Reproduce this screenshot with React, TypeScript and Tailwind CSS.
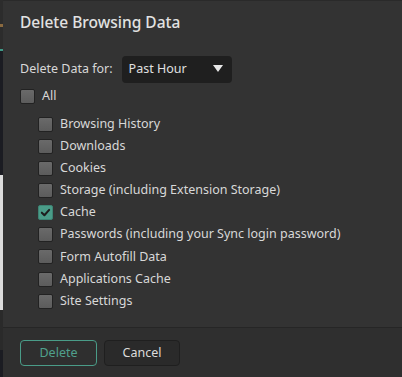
import { useState } from "react";

const items = [
    "Browsing History",
    "Downloads",
    "Cookies",
    "Storage (including Extension Storage)",
    "Cache",
    "Passwords (including your Sync login password)",
    "Form Autofill Data",
    "Applications Cache",
    "Site Settings",
];

const Box: React.FC<{ checked: boolean; onToggle: () => void }> = ({ checked, onToggle }) => {
    if (checked) {
        return (
            <button onClick={onToggle} className="w-[15px] h-[15px] rounded-[2px] bg-[#4a9c88] border border-[#3d8373] flex items-center justify-center shrink-0">
                <svg width="11" height="11" viewBox="0 0 12 12">
                    <path d="M2 6.2 L4.8 9 L10 3.2" fill="none" stroke="#1d1d1d" strokeWidth="2.2" strokeLinecap="round" strokeLinejoin="round" />
                </svg>
            </button>
        );
    }
    return (
        <button onClick={onToggle} className="w-[15px] h-[15px] rounded-[2px] bg-gradient-to-b from-[#6a6a6a] to-[#5c5c5c] border border-[#222222] shrink-0" />
    );
};

export default function App() {
    const [all, setAll] = useState(false);
    const [checked, setChecked] = useState<boolean[]>(items.map((i) => i === "Cache"));

    const toggle = (idx: number) => {
        setChecked(checked.map((c, i) => (i === idx ? !c : c)));
    };

    return (
        <div className="flex w-[402px] h-[377px] overflow-hidden font-['Noto_Sans',sans-serif] text-[12.5px] text-[#d8d8d8]">
            {/* window behind the dialog */}
            <div className="w-[3px] flex flex-col shrink-0">
                <div className="h-[24px] bg-[#2c2c2c]" />
                <div className="h-[3px] bg-[#8a6a40]" />
                <div className="h-[22px] bg-[#2c2c2c]" />
                <div className="h-[2px] bg-[#3f9a88]" />
                <div className="h-[124px] bg-[#1b1c22]" />
                <div className="h-[135px] bg-[#dcdcdc]" />
                <div className="h-[40px] bg-[#2a2a2a]" />
                <div className="flex-1 bg-[#1b1c22]" />
            </div>

            <div className="flex-1 flex flex-col bg-[#333333] border-t border-[#2a2a2a]">
                <div className="flex-1 flex flex-col">
                    <h1 className="px-[17px] pt-[10px] h-[44px] text-[15.5px] font-medium text-[#e2e2e2]">Delete Browsing Data</h1>

                    <div className="flex items-center gap-[9px] px-[17px] h-[28px] mt-[10px]">
                        <span>Delete Data for:</span>
                        <div className="flex items-center justify-between w-[110px] h-[27px] rounded-[4px] bg-[#1f1f1f] pl-[7px] pr-[9px] text-[#e0e0e0]">
                            <span>Past Hour</span>
                            <svg width="10" height="8" viewBox="0 0 10 8">
                                <path d="M0 0 H10 L5 7 Z" fill="#e8e8e8" />
                            </svg>
                        </div>
                    </div>

                    <div className="flex items-center gap-[7px] px-[17px] h-[24px] mt-[1px]">
                        <Box checked={all} onToggle={() => setAll(!all)} />
                        <span>All</span>
                    </div>

                    <div className="flex flex-col pl-[35px] mt-[5px]">
                        {items.map((item, idx) => (
                            <div key={item} className="flex items-center gap-[7px] h-[22.15px]">
                                <Box checked={checked[idx]} onToggle={() => toggle(idx)} />
                                <span>{item}</span>
                            </div>
                        ))}
                    </div>
                </div>

                <div className="h-[50px] border-t border-[#262626] bg-[#2f2f2f] flex items-start gap-[7px] px-[17px] pt-[12px]">
                    <button className="w-[77px] h-[26px] rounded-[4px] border border-[#4a9c88] text-[#4fa08c]">Delete</button>
                    <button className="w-[76px] h-[26px] rounded-[4px] border border-[#1f1f1f] bg-[#2a2a2a] text-[#dcdcdc]">Cancel</button>
                </div>
            </div>
        </div>
    );
}
